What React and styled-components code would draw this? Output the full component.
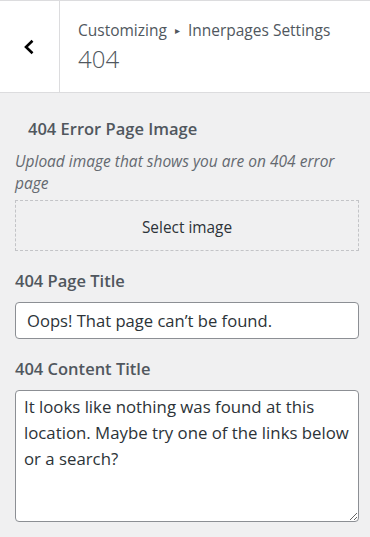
import React from "react";
import styled, { createGlobalStyle } from "styled-components";

const Global = createGlobalStyle`
  html, body { margin: 0; padding: 0; background: #f0f0f1; }
  body { font-family: "Open Sans", "Noto Sans", sans-serif; color: #50575e; }
  * { box-sizing: border-box; }
`;

const Panel = styled.div`
  width: 370px;
  min-height: 537px;
  background: #f0f0f1;
`;

const Header = styled.header`
  display: flex;
  height: 93px;
  background: #fff;
  border-top: 1px solid #dcdcde;
  border-bottom: 1px solid #dcdcde;
`;

const BackButton = styled.button`
  width: 60px;
  flex: none;
  display: flex;
  align-items: center;
  justify-content: center;
  background: #fff;
  border: none;
  border-right: 1px solid #dcdcde;
  padding: 0 1px 0 0;
  cursor: pointer;
`;

const TitleBlock = styled.div`
  display: flex;
  flex-direction: column;
  padding: 17px 0 0 18px;
`;

const Crumbs = styled.div`
  font-size: 15.5px;
  line-height: 24px;
  color: #50575e;
  display: flex;
  align-items: center;
  gap: 8px;
`;

const Arrow = styled.span`
  font-size: 10px;
  color: #50575e;
`;

const PageTitle = styled.h1`
  margin: 0;
  font-size: 24px;
  font-weight: 300;
  line-height: 34px;
  color: #50575e;
`;

const Body = styled.div`
  padding: 24px 11px 0 15px;
  display: flex;
  flex-direction: column;
`;

const Label = styled.div`
  font-size: 16.5px;
  font-weight: 600;
  line-height: 24px;
  color: #50575e;
  padding-left: ${(p) => (p.$indent ? "13px" : "0")};
  margin-bottom: 9px;
`;

const Desc = styled.div`
  font-size: 15.5px;
  font-style: italic;
  line-height: 22px;
  color: #646970;
  margin-bottom: 6px;
`;

const SelectBox = styled.button`
  height: 51px;
  width: 100%;
  background: transparent;
  border: 1px dashed #c3c4c7;
  padding: 4px 0 0;
  font-family: inherit;
  font-size: 15.4px;
  color: #2c3338;
  margin-bottom: 18px;
  cursor: pointer;
`;

const TextInput = styled.input`
  width: 100%;
  height: 37px;
  border: 1px solid #8c8f94;
  border-radius: 4px;
  background: #fff;
  padding: 0 11px;
  font-family: inherit;
  font-size: 16.6px;
  color: #2c3338;
  margin-bottom: 18px;
  outline: none;
`;

const TextArea = styled.textarea`
  width: 100%;
  height: 132px;
  border: 1px solid #8c8f94;
  border-radius: 4px;
  background: #fff;
  padding: 3px 8px;
  font-family: inherit;
  font-size: 16.8px;
  line-height: 26px;
  color: #2c3338;
  outline: none;
  resize: vertical;
  display: block;
`;

export default function App() {
  return (
    <Panel>
      <Global />
      <Header>
        <BackButton aria-label="Back">
          <svg width="14" height="16" viewBox="0 0 14 16">
            <polyline points="10.5,1.8 4,8 10.5,14.2" fill="none" stroke="#000" strokeWidth="2.6" />
          </svg>
        </BackButton>
        <TitleBlock>
          <Crumbs>
            <span>Customizing</span>
            <Arrow>▸</Arrow>
            <span>Innerpages Settings</span>
          </Crumbs>
          <PageTitle>404</PageTitle>
        </TitleBlock>
      </Header>
      <Body>
        <Label $indent>404 Error Page Image</Label>
        <Desc>Upload image that shows you are on 404 error page</Desc>
        <SelectBox>Select image</SelectBox>
        <Label>404 Page Title</Label>
        <TextInput defaultValue="Oops! That page can’t be found." />
        <Label>404 Content Title</Label>
        <TextArea defaultValue="It looks like nothing was found at this location. Maybe try one of the links below or a search?" />
      </Body>
    </Panel>
  );
}
